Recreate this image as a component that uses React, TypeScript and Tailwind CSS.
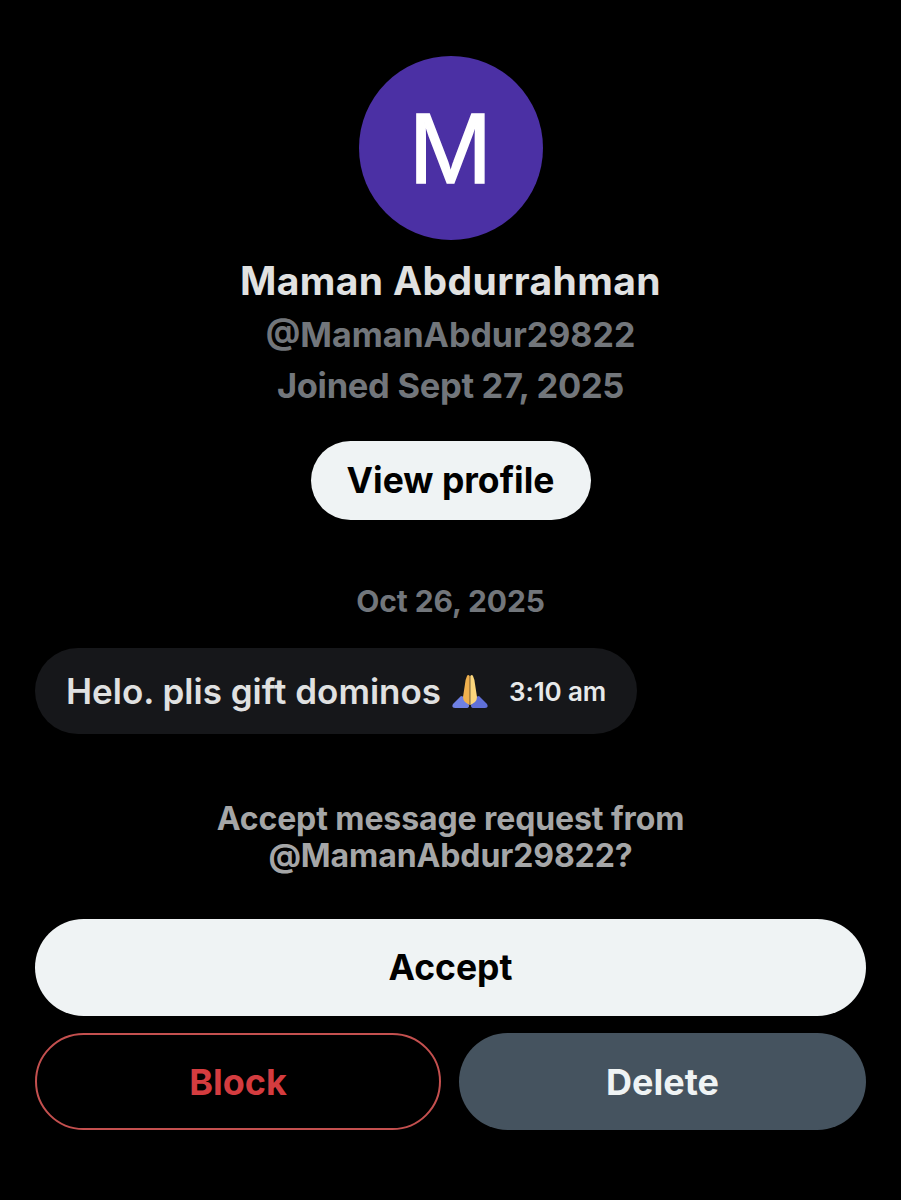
const FONT = "font-['Inter','Liberation_Sans',sans-serif]";

function PrayingHands() {
  return (
    <svg width="36" height="36" viewBox="0 0 36 36" className="shrink-0">
      <path d="M9 23 Q12 23 14 26 L17 32 Q17.500 35 14 35 L3 35 Q-1 35 1 31 Q5 27 9 23 Z" fill="#6e80e4" />
      <path d="M27 23 Q24 23 22 26 L19 32 Q18.500 35 22 35 L33 35 Q37 35 35 31 Q31 27 27 23 Z" fill="#6070d8" />
      <path d="M17.700 3 Q16 1 15 3 Q13.500 6 13 11 L11 24 Q11 27 13 29 L17.400 32 L17.700 32 Z" fill="#efb04e" />
      <path d="M18.300 3 Q20 1 21 3 Q22.500 6 23 11 L25 24 Q25 27 23 29 L18.600 32 L18.300 32 Z" fill="#fbd67c" />
    </svg>
  );
}

export default function App() {
  return (
    <div className={`${FONT} min-h-[1200px] w-[901px] bg-black px-[35px] pt-[56px] flex flex-col`}>
      <div className="flex flex-col items-center">
        <div className="w-[184px] h-[184px] rounded-full bg-[#4b30a4] flex items-center justify-center">
          <span className="text-white text-[100px] leading-none font-normal font-['Liberation_Sans',sans-serif] [-webkit-text-stroke:1.5px_white]">M</span>
        </div>
        <h1 className="mt-[17px] text-[39px] leading-[48px] font-bold text-[#e0e1e1] tracking-[0.4px] whitespace-nowrap">Maman Abdurrahman</h1>
        <p className="mt-[8px] text-[34px] leading-[44px] font-bold text-[#72767b] tracking-[0px] whitespace-nowrap">@MamanAbdur29822</p>
        <p className="mt-[7px] text-[34.5px] leading-[44px] font-bold text-[#72767b] tracking-[-0.3px] whitespace-nowrap">Joined Sept 27, 2025</p>
        <button className="mt-[33px] h-[79px] w-[280px] rounded-full bg-[#eff3f4] text-black text-[35.5px] font-bold">
          View profile
        </button>
        <p className="mt-[59px] text-[30px] leading-[44px] font-bold text-[#72767b] tracking-[-0.1px]">Oct 26, 2025</p>
      </div>

      <div className="mt-[25px] self-start h-[86px] w-[602px] rounded-[43px] bg-[#16171a] flex items-center pl-[31px]">
        <span className="w-[376px] text-[35px] font-semibold text-[#e0e1e1] whitespace-nowrap">Helo. plis gift dominos</span>
        <span className="ml-[10px]"><PrayingHands /></span>
        <span className="ml-[21px] text-[26px] font-semibold text-[#e7e9ea] whitespace-nowrap tracking-[-0.1px]">3:10 am</span>
      </div>

      <p className="mt-[66px] text-center text-[32px] leading-[37px] font-bold text-[#a5a6a7] tracking-[-0.1px] whitespace-nowrap">
        Accept message request from
        <br />
        @MamanAbdur29822?
      </p>

      <button className="mt-[45px] h-[97px] w-full rounded-full bg-[#eff3f4] text-black text-[35.5px] font-bold">
        Accept
      </button>

      <div className="mt-[17px] grid grid-cols-[406px_407px] gap-[18px]">
        <button className="h-[97px] rounded-full border-[2px] border-[#c4504f] text-[#d43c3f] text-[36px] font-bold">
          Block
        </button>
        <button className="h-[97px] rounded-full bg-[#45535f] text-[#eff3f4] text-[36px] font-bold">
          Delete
        </button>
      </div>
    </div>
  );
}
